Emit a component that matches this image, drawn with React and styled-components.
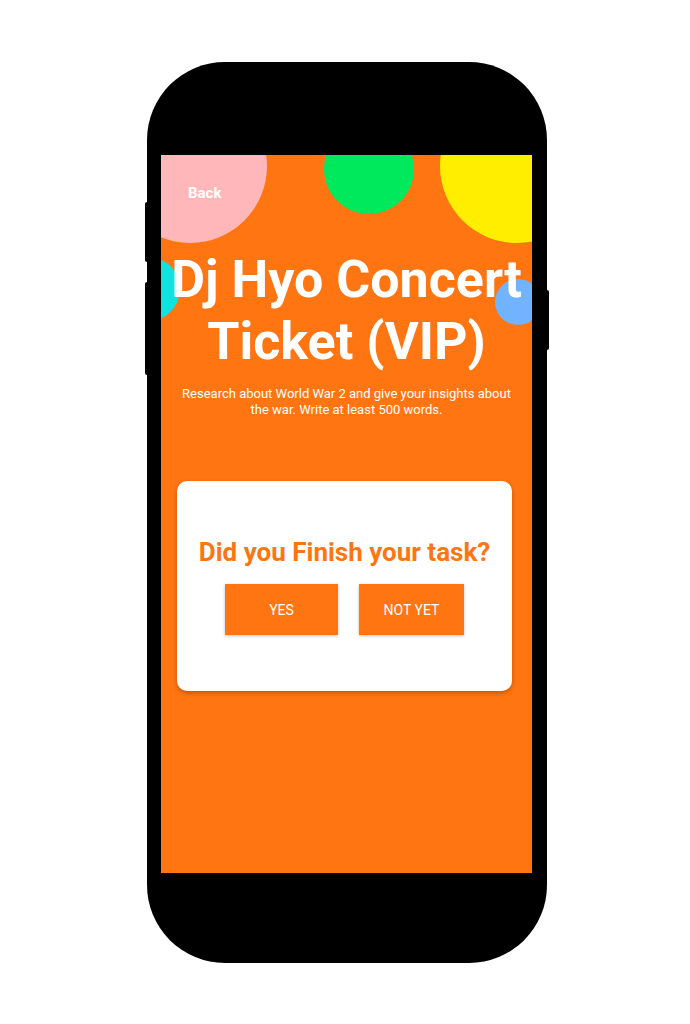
import React from 'react'
import styled, { createGlobalStyle } from 'styled-components'

const GlobalStyle = createGlobalStyle`
  html, body {
    margin: 0;
    padding: 0;
    background: #fff;
    font-family: Roboto, "Liberation Sans", sans-serif;
  }
`

const orange = '#fe7512'

const App = () => {
  return (
    <Page>
      <GlobalStyle />
      <Phone>
        <SideKey $side="left" $top={140} $height={60} />
        <SideKey $side="left" $top={220} $height={93} />
        <SideKey $side="right" $top={228} $height={60} />
        <Screen>
          <Bubble $color="#ffb7b9" $size={154} $x={-48} $y={-66} />
          <Bubble $color="#00e95d" $size={90} $x={163} $y={-31} />
          <Bubble $color="#ffee00" $size={154} $x={279} $y={-66} />
          <Bubble $color="#0fe3df" $size={64} $x={-45} $y={102} />
          <Bubble $color="#72b3ff" $size={46} $x={334} $y={124} />

          <Content>
            <TopBar>
              <BackLink href="#">Back</BackLink>
            </TopBar>
            <Title>Dj Hyo Concert Ticket (VIP)</Title>
            <Description>
              Research about World War 2 and give your insights about the war. Write at least 500 words.
            </Description>

            <Card>
              <Question>Did you Finish your task?</Question>
              <Actions>
                <ActionButton $width={113}>YES</ActionButton>
                <ActionButton $width={105}>NOT YET</ActionButton>
              </Actions>
            </Card>
          </Content>
        </Screen>
      </Phone>
    </Page>
  )
}

export default App

const Page = styled.div`
  width: 690px;
  height: 1024px;
  display: flex;
  justify-content: center;
  padding-top: 62px;
  box-sizing: border-box;
`

const Phone = styled.div`
  position: relative;
  width: 400px;
  height: 901px;
  margin-left: 4px;
  background: #000;
  border-radius: 78px;
  padding: 93px 15px 90px 14px;
  box-sizing: border-box;
`

const SideKey = styled.span`
  position: absolute;
  top: ${p => p.$top}px;
  ${p => (p.$side === 'left' ? 'left: -2px;' : 'right: -2px;')}
  width: 4px;
  height: ${p => p.$height}px;
  background: #000;
  border-radius: 2px;
`

const Screen = styled.div`
  position: relative;
  width: 371px;
  height: 718px;
  background: ${orange};
  overflow: hidden;
`

const Bubble = styled.div`
  position: absolute;
  left: ${p => p.$x}px;
  top: ${p => p.$y}px;
  width: ${p => p.$size}px;
  height: ${p => p.$size}px;
  border-radius: 50%;
  background: ${p => p.$color};
`

const Content = styled.div`
  position: relative;
  z-index: 1;
  display: flex;
  flex-direction: column;
  align-items: center;
  padding-top: 29px;
`

const TopBar = styled.div`
  align-self: stretch;
  display: flex;
  padding-left: 27px;
  height: 18px;
`

const BackLink = styled.a`
  color: #fff;
  font-weight: 700;
  font-size: 15px;
  line-height: 18px;
  text-decoration: none;
`

const Title = styled.h1`
  margin: 47px 0 0;
  width: 371px;
  color: #fff;
  font-size: 52px;
  line-height: 62px;
  font-weight: 700;
  text-align: center;
`

const Description = styled.p`
  margin: 13px 0 0;
  width: 345px;
  color: #fff;
  font-size: 13px;
  line-height: 15.5px;
  text-align: center;
`

const Card = styled.div`
  margin-top: 64px;
  margin-right: 4px;
  width: 335px;
  height: 210px;
  box-sizing: border-box;
  background: #fff;
  border-radius: 10px;
  box-shadow: 0 2px 4px rgba(120, 50, 0, 0.45);
  display: flex;
  flex-direction: column;
  align-items: center;
  padding-top: 56px;
`

const Question = styled.h2`
  margin: 0;
  color: ${orange};
  font-size: 26px;
  line-height: 30px;
  font-weight: 700;
`

const Actions = styled.div`
  display: flex;
  gap: 21px;
  margin-top: 17px;
`

const ActionButton = styled.button`
  width: ${p => p.$width}px;
  height: 51px;
  border: none;
  background: ${orange};
  color: #fff;
  font-family: Roboto, "Liberation Sans", sans-serif;
  font-size: 14px;
  box-shadow: 0 1px 3px rgba(0, 0, 0, 0.25);
  cursor: pointer;
`
